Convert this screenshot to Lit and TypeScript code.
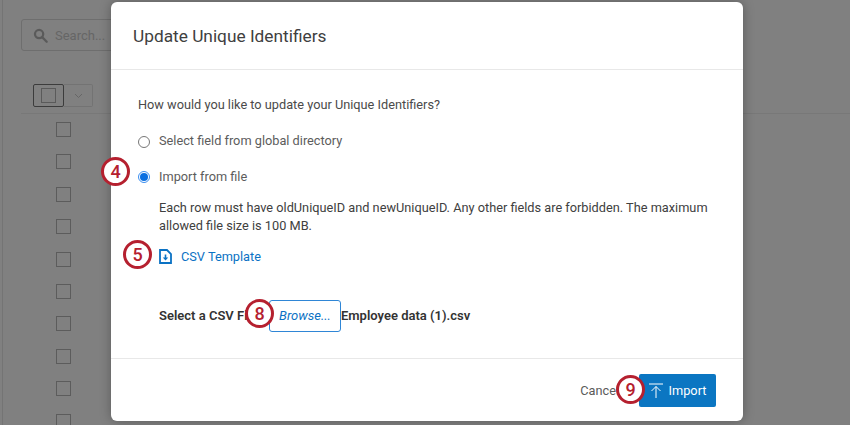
import { LitElement, html, css } from "lit";
import { customElement } from "lit/decorators.js";

@customElement("app-root")
export class AppRoot extends LitElement {
  static styles = css`
    :host {
      display: block;
      position: relative;
      width: 850px;
      height: 425px;
      overflow: hidden;
      background: #808080;
      font-family: Roboto, "Noto Sans", sans-serif;
      color: #4a4a4a;
    }
    .page {
      height: 100%;
      box-sizing: border-box;
      margin-left: 2px;
      border-left: 1px solid #747474;
      padding: 19px 0 0 18px;
      display: flex;
      flex-direction: column;
    }
    .page > * { flex: none; }
    .search {
      width: 120px;
      height: 32px;
      box-sizing: border-box;
      border: 1px solid #6e6e6e;
      border-radius: 3px;
      display: flex;
      align-items: center;
      gap: 7px;
      padding-left: 11px;
      color: #666;
      font-size: 13px;
    }
    .table-head {
      margin-top: 33px;
      padding: 0 0 6px 12px;
      border-bottom: 1px solid #787878;
    }
    .toolbar {
      display: flex;
      width: 60px;
      height: 23px;
    }
    .toolbar-check {
      width: 31px;
      box-sizing: border-box;
      border: 1px solid #3c3c3c;
      border-radius: 2px;
      display: flex;
      align-items: center;
      justify-content: center;
    }
    .toolbar-check i {
      width: 13px;
      height: 13px;
      border: 1px solid #5a5a5a;
    }
    .toolbar-menu {
      flex: 1;
      box-sizing: border-box;
      border: 1px solid #737373;
      border-left: 0;
      border-radius: 0 2px 2px 0;
      display: flex;
      align-items: center;
      justify-content: center;
    }
    .rows {
      margin: 8px 0 0 35px;
      display: flex;
      flex-direction: column;
      gap: 17.4px;
    }
    .row {
      display: flex;
      align-items: flex-start;
      height: 15px;
    }
    .row i {
      width: 13px;
      height: 13px;
      border: 1px solid #5c5c5c;
      flex: none;
    }
    .row span {
      margin: 8px 0 0 47px;
      font-size: 13px;
      line-height: 15px;
      color: #1c1c1c;
      white-space: nowrap;
    }
    .modal {
      position: absolute;
      left: 111px;
      top: 2px;
      width: 632px;
      height: 419px;
      background: #fff;
      border-radius: 6px;
      box-shadow: 0 0 12px rgba(0, 0, 0, 0.3);
      display: flex;
      flex-direction: column;
    }
    .head {
      height: 68px;
      flex: none;
      box-sizing: border-box;
      padding: 0 22px;
      display: flex;
      align-items: center;
      border-bottom: 1px solid #e8e8e8;
      font-size: 17.3px;
      color: #404040;
    }
    .body {
      flex: 1;
      padding: 26px 27px 0;
      font-size: 12.75px;
      line-height: 18.5px;
    }
    .radio {
      display: flex;
      align-items: center;
      gap: 9px;
      height: 20px;
      color: #5c5c5c;
    }
    .radio i {
      width: 10px;
      height: 10px;
      border: 1px solid #777;
      border-radius: 50%;
      flex: none;
    }
    .radio i.on {
      border: 1px solid #3b8ef0;
      position: relative;
    }
    .radio i.on::after {
      content: "";
      position: absolute;
      inset: 1px;
      border-radius: 50%;
      background: #0b6fe0;
    }
    .question { margin-bottom: 17px; }
    .radio + .radio { margin-top: 15.5px; }
    .note {
      margin: 11.5px 0 0 21px;
      color: #404040;
      width: 570px;
    }
    .template {
      margin: 12px 0 0 21px;
      display: flex;
      align-items: center;
      gap: 9px;
      color: #0b72c4;
    }
    .select {
      margin: 34px 0 0 21px;
      display: flex;
      align-items: center;
      font-size: 13px;
      font-weight: 600;
      color: #333;
      white-space: nowrap;
    }
    .clip {
      width: 110px;
      overflow: hidden;
    }
    .browse {
      width: 72px;
      height: 32px;
      box-sizing: border-box;
      border: 1px solid #2f86d6;
      border-radius: 3px;
      display: flex;
      align-items: center;
      justify-content: center;
      font-style: italic;
      font-weight: 400;
      color: #0b72c4;
    }
    .foot {
      height: 63px;
      flex: none;
      box-sizing: border-box;
      border-top: 1px solid #e8e8e8;
      padding: 0 27px 0 0;
      display: flex;
      align-items: center;
      justify-content: flex-end;
      gap: 20px;
      font-size: 12.75px;
    }
    .cancel { color: #5a5a5a; }
    .import {
      width: 77px;
      height: 33px;
      background: #0b76c2;
      color: #fff;
      border-radius: 2px;
      display: flex;
      align-items: center;
      justify-content: center;
      gap: 6px;
    }
    .mark {
      position: absolute;
      width: 23px;
      height: 23px;
      border: 3.5px solid #b5202f;
      border-radius: 50%;
      background: #fff;
      color: #b5202f;
      display: flex;
      align-items: center;
      justify-content: center;
      font-size: 18px;
      font-weight: 500;
    }
  `;

  render() {
    const marks = [
      { n: 4, x: 101, y: 157 },
      { n: 5, x: 123, y: 240 },
      { n: 8, x: 245, y: 299 },
      { n: 9, x: 616, y: 375 },
    ];
    return html`
      <div class="page">
        <div class="search">
          <svg width="15" height="15" viewBox="0 0 16 16" fill="none" stroke="#5a5a5a" stroke-width="2.4">
            <circle cx="6.5" cy="6.5" r="4.4"></circle>
            <path d="M10 10l4.6 4.6" stroke-linecap="round"></path>
          </svg>
          Search...
        </div>
        <div class="table-head">
          <div class="toolbar">
            <div class="toolbar-check"><i></i></div>
            <div class="toolbar-menu">
              <svg width="9" height="6" viewBox="0 0 9 6" fill="none" stroke="#666"><path d="M1 1l3.5 3.5L8 1"></path></svg>
            </div>
          </div>
        </div>
        <div class="rows">
          ${Array.from({ length: 9 }, () => html`<div class="row"><i></i></div>`)}
          <div class="row"><i></i><span>HE 100 118 HH</span></div>
        </div>
      </div>

      <div class="modal">
        <div class="head">Update Unique Identifiers</div>
        <div class="body">
          <div class="question">How would you like to update your Unique Identifiers?</div>
          <div class="radio"><i></i>Select field from global directory</div>
          <div class="radio"><i class="on"></i>Import from file</div>
          <div class="note">
            Each row must have oldUniqueID and newUniqueID. Any other fields are forbidden. The maximum
            allowed file size is 100 MB.
          </div>
          <div class="template">
            <svg width="13" height="15" viewBox="0 0 13 15" fill="none" stroke="#0b72c4" stroke-width="1.8">
              <path d="M1 1h7l4 4v9H1z"></path>
              <path d="M6.5 5.5v4" stroke-width="1.6"></path>
              <path d="M3.8 8.5h5.4L6.5 11.6z" fill="#0b72c4" stroke="none"></path>
            </svg>
            CSV Template
          </div>
          <div class="select">
            <span class="clip">Select a CSV File</span>
            <span class="browse">Browse...</span>
            <span>Employee data (1).csv</span>
          </div>
        </div>
        <div class="foot">
          <span class="cancel">Cancel</span>
          <span class="import">
            <svg width="14" height="15" viewBox="0 0 14 15" fill="none" stroke="#fff" stroke-width="1">
              <path d="M0 1h14M7 15V3.5M2.5 8L7 3.5 11.5 8"></path>
            </svg>
            Import
          </span>
        </div>
      </div>

      ${marks.map(
        (m) => html`<span class="mark" style="left:${m.x}px;top:${m.y}px">${m.n}</span>`
      )}
    `;
  }
}
